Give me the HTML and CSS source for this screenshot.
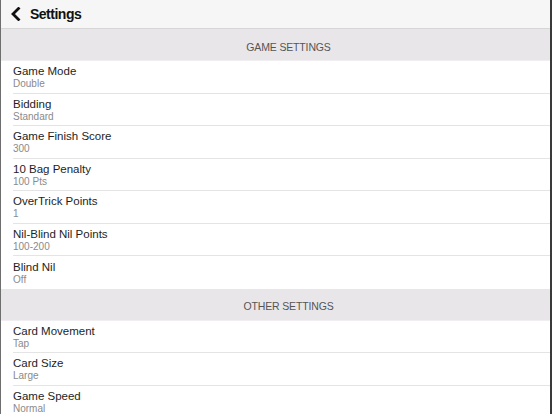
FILE: index.html
```html
<!DOCTYPE html>
<html>
<head>
<meta charset="utf-8">
<link rel="stylesheet" href="styles.css">
</head>
<body>
<div class="frame">
  <header class="nav">
    <svg class="back" width="11" height="14" viewBox="0 0 11 14"><path d="M8.5 1.5 L3 7 L8.5 12.5" fill="none" stroke="#111" stroke-width="2.8" stroke-linecap="square"/></svg>
    <span class="nav-title">Settings</span>
  </header>
  <div class="section">GAME SETTINGS</div>
  <div class="row"><div class="t">Game Mode</div><div class="s">Double</div></div>
  <div class="row"><div class="t">Bidding</div><div class="s">Standard</div></div>
  <div class="row"><div class="t">Game Finish Score</div><div class="s">300</div></div>
  <div class="row"><div class="t">10 Bag Penalty</div><div class="s">100 Pts</div></div>
  <div class="row"><div class="t">OverTrick Points</div><div class="s">1</div></div>
  <div class="row"><div class="t">Nil-Blind Nil Points</div><div class="s">100-200</div></div>
  <div class="row last"><div class="t">Blind Nil</div><div class="s">Off</div></div>
  <div class="section">OTHER SETTINGS</div>
  <div class="row"><div class="t">Card Movement</div><div class="s">Tap</div></div>
  <div class="row"><div class="t">Card Size</div><div class="s">Large</div></div>
  <div class="row"><div class="t">Game Speed</div><div class="s">Normal</div></div>
</div>
</body>
</html>
```
FILE: styles.css
```css
html, body { margin: 0; padding: 0; }
body {
  font-family: "Liberation Sans", Arial, sans-serif;
  background: #fff;
  width: 552px;
  height: 414px;
  overflow: hidden;
}
.frame {
  height: 414px;
  border-left: 1px solid #6e6e6e;
  border-right: 2px solid #3a3a3a;
  box-sizing: border-box;
  overflow: hidden;
}
.nav {
  height: 28px;
  background: #f6f6f6;
  border-bottom: 1px solid #d6d6d6;
  display: flex;
  align-items: center;
  padding-left: 9px;
  gap: 9px;
}
.back { display: block; margin-top: -1px; }
.nav-title {
  font-size: 14px;
  font-weight: bold;
  letter-spacing: -0.5px;
  color: #111;
  margin-top: -1px;
}
.section {
  height: 32px;
  background: #e9e6e9;
  display: flex;
  align-items: center;
  justify-content: center;
  font-size: 10.5px;
  letter-spacing: -0.15px;
  color: #555;
  border-bottom: 1px solid #f0eef0;
  box-sizing: border-box;
  padding-top: 4px;
  padding-left: 26px;
}
.row {
  height: 32.5px;
  box-sizing: border-box;
  margin-left: 12px;
  border-bottom: 1px solid #e4e4e4;
  display: flex;
  flex-direction: column;
  justify-content: center;
  padding-top: 1px;
}
.row.last { border-bottom: none; }
.t { font-size: 11.5px; color: #1e1e1e; line-height: 13px; }
.s { font-size: 10px; color: #8a8a8a; line-height: 11px; }
```
